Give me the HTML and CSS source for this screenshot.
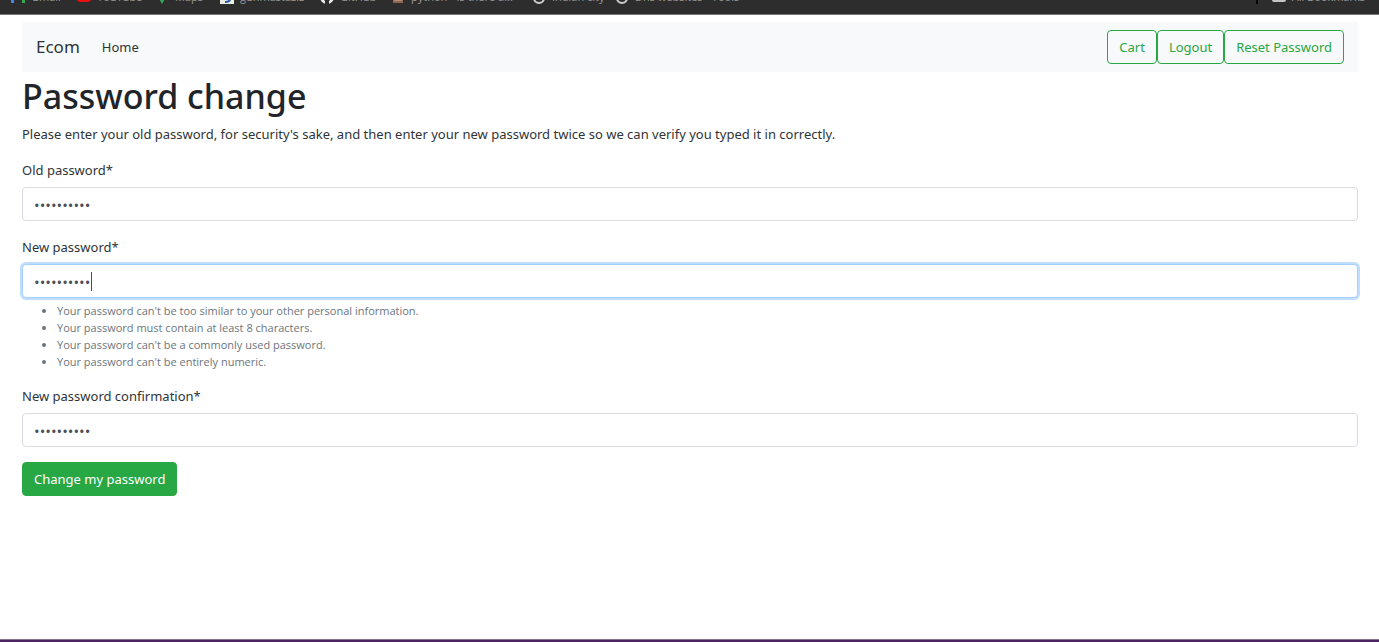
FILE: index.html
```html
<!DOCTYPE html>
<html lang="en">
<head>
<meta charset="utf-8">
<title>Password change</title>
<link rel="stylesheet" href="styles.css">
</head>
<body>
<header class="bookmarks">
  <a class="bookmark gmail" href="#"><svg class="icon" viewBox="0 0 14 14"><path d="M0 3h3v10H0z" fill="#4285f4"/><path d="M11 3h3v10h-3z" fill="#34a853"/><path d="M0 1l7 6 7-6v3l-7 6-7-6z" fill="#ea4335"/></svg>Gmail</a>
  <a class="bookmark youtube" href="#"><svg class="icon" viewBox="0 0 14 14"><rect y="1" width="14" height="11" rx="3" fill="#e60f0f"/><path d="M5.500 4v5l4-2.500z" fill="#fff"/></svg>YouTube</a>
  <a class="bookmark maps" href="#"><svg class="icon" viewBox="0 0 14 14"><path d="M7 14L3 7a4.500 4.500 0 1 1 8 0z" fill="#34a853"/></svg>Maps</a>
  <a class="bookmark guide" href="#"><svg class="icon" viewBox="0 0 14 14"><path d="M0 0h14v14H0z" fill="#e9eee5"/><path d="M10 5v4q0 3-5 3" fill="none" stroke="#2459a5" stroke-width="2"/></svg>gunmastaziz</a>
  <a class="bookmark github" href="#"><svg class="icon" viewBox="0 0 14 14"><circle cx="7" cy="7" r="7" fill="#eee"/><path d="M5 14v-3Q2 9 4 5q3-2 6 0 2 4-1 6v3z" fill="#2d2d2d"/></svg>GitHub</a>
  <a class="bookmark python" href="#"><svg class="icon" viewBox="0 0 14 14"><path d="M2 1h10v12H2z" fill="#8b6652"/><path d="M3 10h8v1H3z" fill="#b78a70"/></svg>python - Is there a...</a>
  <a class="bookmark city" href="#"><svg class="icon" viewBox="0 0 14 14"><circle cx="7" cy="8" r="5" fill="none" stroke="#ccc" stroke-width="2"/></svg>Indian city</a>
  <a class="bookmark notes" href="#"><svg class="icon" viewBox="0 0 14 14"><circle cx="7" cy="8" r="5" fill="none" stroke="#ccc" stroke-width="2"/></svg>Dhs websites - Tools</a>
  <span class="divider"></span>
  <a class="bookmark all" href="#"><svg class="icon" viewBox="0 0 14 14"><path d="M0 0h6l1 2h7v8q0 2-2 2H2q-2 0-2-2z" fill="#c5c5c5"/><path d="M2 4h10v6H2z" fill="#999"/></svg>All Bookmarks</a>
</header>
<main class="page">
  <nav class="navbar">
    <a class="brand" href="#">Ecom</a>
    <a class="nav-link" href="#">Home</a>
    <div class="actions">
      <button class="btn btn-outline" type="button">Cart</button>
      <button class="btn btn-outline" type="button">Logout</button>
      <button class="btn btn-outline" type="button">Reset Password</button>
    </div>
  </nav>
  <h1 class="title">Password change</h1>
  <p class="lead">Please enter your old password, for security's sake, and then enter your new password twice so we can verify you typed it in correctly.</p>
  <form class="form">
    <div class="group">
      <label class="label" for="old">Old password*</label>
      <input class="field" id="old" type="password" value="abcdefghij">
    </div>
    <div class="group">
      <label class="label" for="new">New password*</label>
      <div class="field-wrap">
        <input class="field field-active" id="new" type="password" value="abcdefghij">
        <span class="caret"></span>
      </div>
      <ul class="hints">
        <li>Your password can't be too similar to your other personal information.</li>
        <li>Your password must contain at least 8 characters.</li>
        <li>Your password can't be a commonly used password.</li>
        <li>Your password can't be entirely numeric.</li>
      </ul>
    </div>
    <div class="group">
      <label class="label" for="confirm">New password confirmation*</label>
      <input class="field" id="confirm" type="password" value="abcdefghij">
    </div>
    <button class="btn btn-solid" type="button">Change my password</button>
  </form>
</main>
<footer class="taskbar"></footer>
</body>
</html>
```
FILE: styles.css
```css
* { box-sizing: border-box; }

body {
  margin: 0;
  min-height: 100vh;
  display: flex;
  flex-direction: column;
  background: #fff;
  color: #2f3438;
  font-family: "Noto Sans", "Open Sans", sans-serif;
  font-size: 13px;
  line-height: 22px;
}

a { color: inherit; text-decoration: none; }

.bookmarks {
  display: flex;
  align-items: flex-end;
  height: 15px;
  padding: 0 14px 10px 11px;
  overflow: hidden;
  background: #2d2d2d;
  border-bottom: 1px solid #777;
}
.bookmark {
  display: flex;
  align-items: flex-end;
  flex: none;
  gap: 6px;
  color: #999;
  font-family: "Open Sans", sans-serif;
  font-size: 11px;
  line-height: 14px;
  white-space: nowrap;
}
.icon { width: 14px; height: 14px; flex: none; }
.gmail { width: 66px; }
.youtube { width: 78px; }
.maps { width: 65px; }
.guide { width: 100px; }
.github { width: 71px; }
.python { width: 141px; }
.city { width: 83px; }
.divider {
  width: 2px;
  height: 14px;
  margin-left: auto;
  margin-right: 14px;
  background: #000;
}

.page { flex: 1; padding: 7px 21px 0 22px; }

.navbar {
  display: flex;
  align-items: center;
  padding: 8px 14px;
  background: #f8f9fa;
}
.brand { margin-right: 22px; font-size: 17px; }
.actions { display: flex; margin-left: auto; }

.btn {
  height: 34px;
  padding: 0 11px;
  border: 1px solid #28a745;
  border-radius: 4px;
  font: inherit;
}
.btn-outline { background: transparent; color: #28a745; }
.btn-solid { background: #28a745; color: #fff; }

.title {
  margin: 0 0 5px;
  padding-top: 2px;
  color: #212529;
  font-size: 34px;
  font-weight: 500;
  line-height: 44px;
}
.lead { margin: 0 0 14px; }

.form {
  display: flex;
  flex-direction: column;
  align-items: flex-start;
  gap: 15px;
}
.group { width: 100%; }
.label { display: block; margin-bottom: 6px; }
.field {
  display: block;
  width: 100%;
  height: 34px;
  padding: 1px 11px 0;
  border: 1px solid #d9dde1;
  border-radius: 4px;
  background: #fff;
  color: #495057;
  font-family: "Open Sans", sans-serif;
  font-size: 15px;
}
.field-wrap { position: relative; }
.field-active {
  border-color: #a6d0ff;
  box-shadow: 0 0 0 2px #bfdeff;
}
.caret {
  position: absolute;
  left: 69px;
  top: 8px;
  width: 1px;
  height: 19px;
  background: #495057;
}
.hints {
  margin: 4px 0 0;
  padding-left: 35px;
  color: #6c757d;
  font-family: "Open Sans", sans-serif;
  font-size: 11px;
  line-height: 17px;
}

.taskbar {
  height: 3px;
  background: #4b2461;
  border-top: 1px solid #84708f;
}
```
